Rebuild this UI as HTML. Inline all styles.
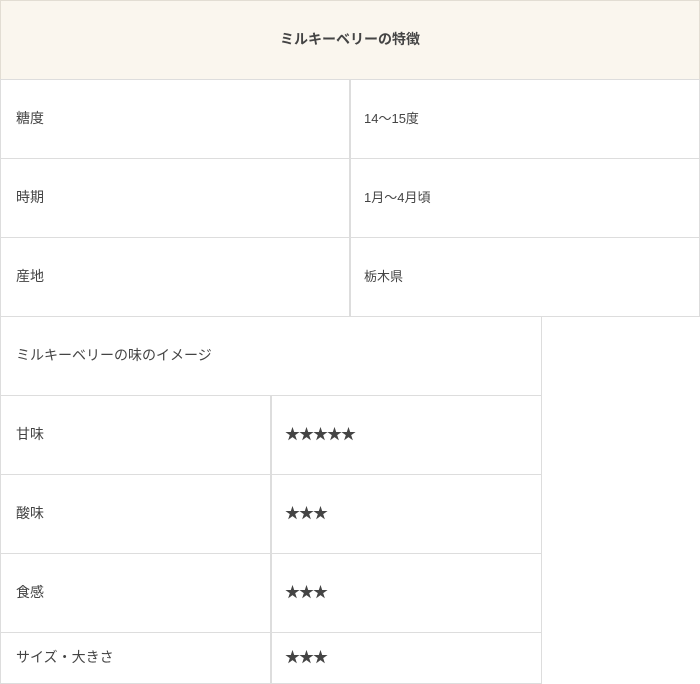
<!DOCTYPE html>
<html><head><meta charset="utf-8"><style>
body{margin:0;width:700px;height:684px;background:#fff;font-family:"Liberation Sans","Noto Sans CJK JP",sans-serif;color:#444;font-size:14px;position:relative;overflow:hidden}
.c{position:absolute;box-sizing:border-box;border:1px solid #ddd;display:flex;align-items:center;padding-left:15px;padding-bottom:3px}
.v{font-size:13px;padding-left:14px}
.s{font-size:15px;letter-spacing:-1px;padding-left:14px;color:#444}
</style></head><body>
<div class="c" style="left:0;top:0;width:700px;height:80px;background:#faf6ee;justify-content:center;padding:0 0 3px 0;font-weight:bold;border-color:#e2ddd3">ミルキーベリーの特徴</div>
<div class="c" style="left:0;top:79px;width:351px;height:80px">糖度</div>
<div class="c v" style="left:349px;top:79px;width:351px;height:80px">14〜15度</div>
<div class="c" style="left:0;top:158px;width:351px;height:80px">時期</div>
<div class="c v" style="left:349px;top:158px;width:351px;height:80px">1月〜4月頃</div>
<div class="c" style="left:0;top:237px;width:351px;height:80px">産地</div>
<div class="c v" style="left:349px;top:237px;width:351px;height:80px">栃木県</div>
<div class="c" style="left:0;top:316px;width:542px;height:80px">ミルキーベリーの味のイメージ</div>
<div class="c" style="left:0;top:395px;width:272px;height:80px">甘味</div>
<div class="c s" style="left:270px;top:395px;width:272px;height:80px">★★★★★</div>
<div class="c" style="left:0;top:474px;width:272px;height:80px">酸味</div>
<div class="c s" style="left:270px;top:474px;width:272px;height:80px">★★★</div>
<div class="c" style="left:0;top:553px;width:272px;height:80px">食感</div>
<div class="c s" style="left:270px;top:553px;width:272px;height:80px">★★★</div>
<div class="c" style="left:0;top:632px;width:272px;height:52px">サイズ・大きさ</div>
<div class="c s" style="left:270px;top:632px;width:272px;height:52px">★★★</div>
</body></html>
